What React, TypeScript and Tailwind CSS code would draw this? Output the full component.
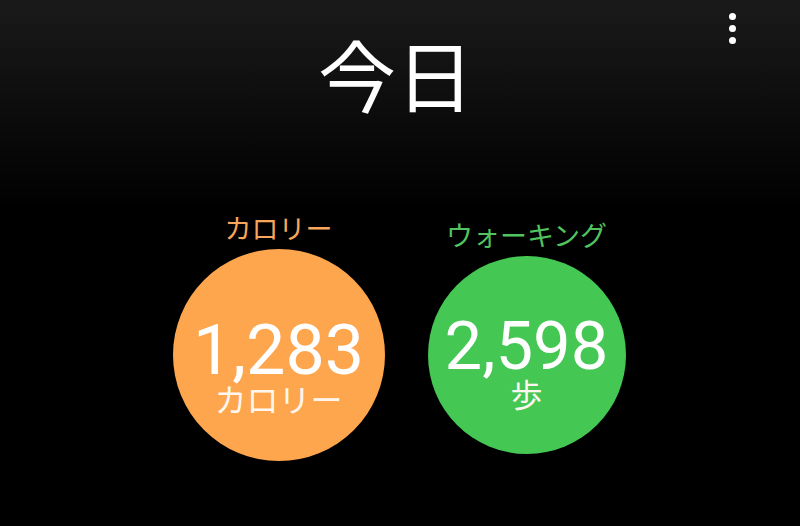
import React from 'react'

// ─── Stat Circle ──────────────────────────────────────────────────────────────
type Stat = {
  label: string
  value: string
  unit: string
  labelColor: string
  circle: string
  number: string
  inner: string
}

const stats: Stat[] = [
  {
    label: 'カロリー',
    value: '1,283',
    unit: 'カロリー',
    labelColor: 'text-[#f7a65c]',
    circle: 'w-[212px] h-[212px] bg-[#fea64e]',
    number: 'text-[70px]',
    inner: 'pt-[22px]',
  },
  {
    label: 'ウォーキング',
    value: '2,598',
    unit: '歩',
    labelColor: 'text-[#52c45f]',
    circle: 'w-[198px] h-[198px] bg-[#44c753]',
    number: 'text-[67px]',
    inner: 'pt-[15px]',
  },
]

const StatCircle: React.FC<{ stat: Stat }> = ({ stat }) => (
  <div className="flex flex-col items-center gap-1">
    <span className={`text-[27px] leading-[30px] ${stat.labelColor}`}>{stat.label}</span>
    <div className={`rounded-full flex flex-col items-center justify-center text-white ${stat.circle} ${stat.inner}`}>
      <span className={`leading-none font-['Roboto',sans-serif] ${stat.number}`}>{stat.value}</span>
      <span className="text-[32px] leading-none text-[#fff7ee]">{stat.unit}</span>
    </div>
  </div>
)

export default function App() {
  return (
    <div className="relative w-full h-[526px] overflow-hidden bg-[linear-gradient(#1a1a1a,#000_210px)] font-['Roboto','Noto_Sans_CJK_JP',sans-serif]">
      {/* overflow menu */}
      <button className="absolute top-[13px] left-[729px] flex flex-col gap-[5px]">
        <span className="w-[7px] h-[7px] rounded-full bg-white" />
        <span className="w-[7px] h-[7px] rounded-full bg-white" />
        <span className="w-[7px] h-[7px] rounded-full bg-white" />
      </button>

      <h1 className="pt-[34px] text-center text-white text-[78px] leading-none font-['Noto_Sans_CJK_JP',sans-serif] font-normal pr-[8px]">
        今日
      </h1>

      <div className="mt-[103px] flex justify-center items-center gap-[43px] pr-[2px]">
        {stats.map((s) => (
          <StatCircle key={s.label} stat={s} />
        ))}
      </div>
    </div>
  )
}
